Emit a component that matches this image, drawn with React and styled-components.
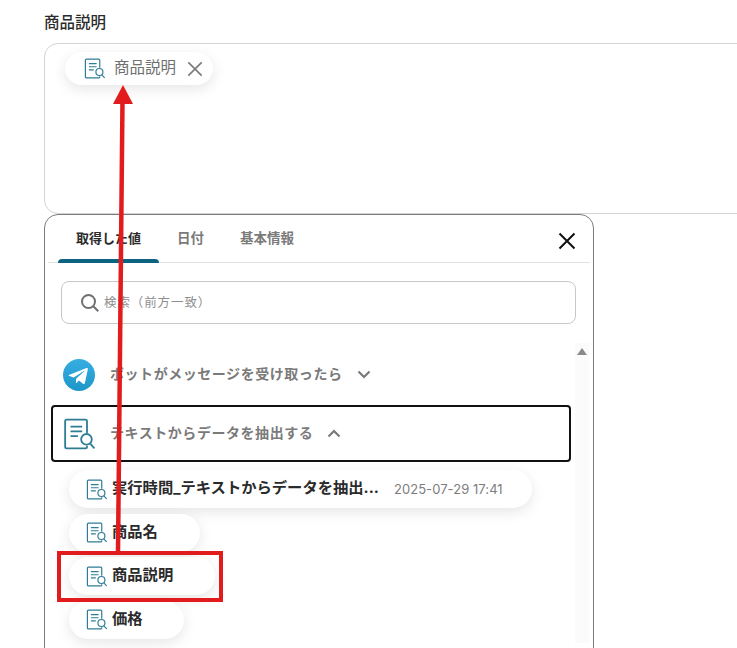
import React from 'react';
import styled, { createGlobalStyle } from 'styled-components';

const GlobalStyle = createGlobalStyle`
  html, body {
    margin: 0;
    padding: 0;
    background: #fff;
  }
  body {
    font-family: Inter, "Noto Sans CJK JP", sans-serif;
  }
`;

const Page = styled.div`
  position: relative;
  width: 737px;
  height: 648px;
  overflow: hidden;
  padding: 13px 0 0 44px;
  box-sizing: border-box;
`;

const Label = styled.div`
  font-size: 15.5px;
  line-height: 20px;
  font-weight: 500;
  color: #2b2b2b;
  margin-bottom: 10px;
`;

const Field = styled.div`
  width: 760px;
  height: 171px;
  box-sizing: border-box;
  border: 1px solid #d3d3da;
  border-radius: 14px;
  padding: 8px 0 0 20px;
`;

const Chip = styled.div`
  display: inline-flex;
  align-items: center;
  box-sizing: border-box;
  height: ${p => p.$h || 38}px;
  width: ${p => p.$w}px;
  padding-left: 17px;
  gap: 5px;
  border-radius: 20px;
  background: #fff;
  box-shadow: 0 4px 14px rgba(0, 0, 0, 0.1);
  flex: none;
`;

const FieldChip = styled(Chip)`
  padding-left: 19px;
  gap: 9px;
`;

const FieldChipText = styled.span`
  font-size: 15.5px;
  line-height: 20px;
  padding-bottom: 1px;
  color: #6f6f6f;
`;

const ChipClose = styled.span`
  display: flex;
  margin-left: 2px;
`;

const Popup = styled.div`
  width: 550px;
  height: 460px;
  box-sizing: border-box;
  background: #fff;
  border: 1px solid #7c7c7c;
  border-radius: 14px;
`;

const Header = styled.div`
  display: flex;
  align-items: stretch;
  justify-content: space-between;
  height: 47px;
  margin: 0 3px;
  padding: 0 14px 0 10px;
  border-bottom: 1px solid #e3e3e3;
`;

const Tabs = styled.div`
  display: flex;
`;

const Tab = styled.div`
  position: relative;
  padding: 14px 18px 0;
  font-size: ${p => (p.$active ? 13 : 13.5)}px;
  line-height: 18px;
  font-weight: 700;
  color: ${p => (p.$active ? '#2b2b2b' : '#7a7a7a')};
  ${p => p.$active && `
    &::after {
      content: '';
      position: absolute;
      left: 0;
      right: 0;
      bottom: -1px;
      height: 4px;
      border-radius: 4px 4px 0 0;
      background: #0c6480;
    }
  `}
`;

const CloseBtn = styled.div`
  display: flex;
  align-items: center;
  padding-top: 4px;
`;

const Search = styled.div`
  display: flex;
  align-items: center;
  gap: 4px;
  height: 43px;
  box-sizing: border-box;
  margin: 18px 17px 0 16px;
  padding-left: 18px;
  border: 1px solid #c8c8c8;
  border-radius: 8px;
`;

const Placeholder = styled.span`
  font-size: 12.5px;
  line-height: 18px;
  letter-spacing: 0.9px;
  color: #8e8e8e;
`;

const Body = styled.div`
  display: flex;
  margin: 19px 4px 0 6px;
`;

const List = styled.div`
  flex: 1;
  min-width: 0;
  padding-top: 3px;
`;

const Scrollbar = styled.div`
  width: 14px;
  height: 300px;
  background: #fbfbfb;
  display: flex;
  justify-content: center;
  padding-top: 5px;
  box-sizing: border-box;
`;

const UpArrow = styled.div`
  width: 0;
  height: 0;
  border-left: 5px solid transparent;
  border-right: 5px solid transparent;
  border-bottom: 7px solid #8a8a8a;
`;

const Group = styled.div`
  display: flex;
  align-items: center;
  box-sizing: border-box;
  height: 57px;
  width: 520px;
  padding-left: 10px;
  gap: 15px;
  border: ${p => (p.$selected ? '2px solid #111' : '2px solid transparent')};
  border-radius: 4px;
  margin-bottom: ${p => (p.$selected ? 8 : 2)}px;
`;

const GroupName = styled.span`
  font-size: 14px;
  line-height: 20px;
  padding-bottom: 1px;
  font-weight: 700;
  letter-spacing: 0.55px;
  color: #7a7a7a;
`;

const Chevron = styled.span`
  display: flex;
  margin-left: -1px;
`;

const Values = styled.div`
  display: flex;
  flex-direction: column;
  align-items: flex-start;
  gap: 5.5px;
  padding-left: 18px;
`;

const ValueName = styled.span`
  font-size: 15.3px;
  line-height: 20px;
  padding-bottom: 2px;
  font-weight: 700;
  color: #2a2a2a;
  white-space: nowrap;
`;

const ValueDate = styled.span`
  font-size: 13px;
  line-height: 20px;
  padding-bottom: 1px;
  letter-spacing: 0.06px;
  color: #7d7d7d;
  margin-left: 10px;
`;

const Callout = styled.div`
  position: absolute;
  left: 57px;
  top: 551px;
  width: 166px;
  height: 51px;
  box-sizing: border-box;
  border: 4px solid #e21c1c;
`;

const ArrowLayer = styled.svg`
  position: absolute;
  left: 0;
  top: 0;
  pointer-events: none;
`;

function DocIcon({ size = 21 }) {
  return (
    <svg width={size} height={size} viewBox="0 0 30 30" fill="none" stroke="#2f7d95" strokeWidth="1.7" style={{ flex: 'none' }}>
      <path d="M20 1.5H3.5a1.5 1.5 0 0 0-1.5 1.5v24a1.5 1.5 0 0 0 1.5 1.5H21a1.5 1.5 0 0 0 1.5-1.5v-1M22.5 14V3a1.5 1.5 0 0 0-1.5-1.5h-2" />
      <path d="M7 8h11M7 12.5h11M7 17h7" stroke="#2f7d95" />
      <circle cx="22" cy="20" r="5" fill="#fff" />
      <path d="M25.5 24l4 4.5" />
    </svg>
  );
}

function TelegramIcon() {
  return (
    <svg width="32" height="32" viewBox="0 0 32 32" style={{ flex: 'none' }}>
      <defs>
        <linearGradient id="tg" x1="0.5" y1="0" x2="0.5" y2="1">
          <stop offset="0" stopColor="#37aee2" />
          <stop offset="1" stopColor="#1e96c8" />
        </linearGradient>
      </defs>
      <circle cx="16" cy="16" r="16" fill="url(#tg)" />
      <path d="M6.5 15.8l17-6.7c.9-.3 1.6.2 1.3 1.4l-2.9 13.6c-.2 1-.8 1.2-1.6.8l-4.4-3.3-2.1 2.1c-.3.3-.5.4-.9.4l.3-4.5 8.2-7.4c.4-.3-.1-.5-.6-.2l-10.1 6.4-4.3-1.4c-.9-.3-.9-.9.1-1.2z" fill="#fff" />
    </svg>
  );
}

function Cross({ size, color, width }) {
  return (
    <svg width={size} height={size} viewBox="0 0 18 18" fill="none" stroke={color} strokeWidth={width}>
      <path d="M1.5 1.5l15 15M16.5 1.5l-15 15" />
    </svg>
  );
}

function Caret({ up }) {
  return (
    <svg width="14" height="9" viewBox="0 0 14 9" fill="none" stroke="#7a7a7a" strokeWidth="2.2">
      <path d={up ? 'M1.5 7.5L7 2l5.5 5.5' : 'M1.5 1.5L7 7l5.5-5.5'} />
    </svg>
  );
}

function SearchIcon() {
  return (
    <svg width="20" height="20" viewBox="0 0 20 20" fill="none" stroke="#707070" strokeWidth="2">
      <circle cx="8.5" cy="8.5" r="6.5" />
      <path d="M13.3 13.3l5 5" />
    </svg>
  );
}

const values = [
  { name: '実行時間_テキストからデータを抽出...', date: '2025-07-29 17:41', w: 463 },
  { name: '商品名', w: 131 },
  { name: '商品説明', w: 146 },
  { name: '価格', w: 115 },
];

export default function App() {
  return (
    <>
      <GlobalStyle />
      <Page>
        <Label>商品説明</Label>
        <Field>
          <FieldChip $w={148} $h={33}>
            <DocIcon />
            <FieldChipText>商品説明</FieldChipText>
            <ChipClose>
              <Cross size={16} color="#7a7a7a" width={1.8} />
            </ChipClose>
          </FieldChip>
        </Field>
        <Popup>
          <Header>
            <Tabs>
              <Tab $active>取得した値</Tab>
              <Tab>日付</Tab>
              <Tab>基本情報</Tab>
            </Tabs>
            <CloseBtn>
              <Cross size={18} color="#111" width={2} />
            </CloseBtn>
          </Header>
          <Search>
            <SearchIcon />
            <Placeholder>検索（前方一致）</Placeholder>
          </Search>
          <Body>
            <List>
              <Group>
                <TelegramIcon />
                <GroupName>ボットがメッセージを受け取ったら</GroupName>
                <Chevron><Caret /></Chevron>
              </Group>
              <Group $selected>
                <DocIcon size={32} />
                <GroupName>テキストからデータを抽出する</GroupName>
                <Chevron><Caret up /></Chevron>
              </Group>
              <Values>
                {values.map(v => (
                  <Chip key={v.name} $w={v.w}>
                    <DocIcon />
                    <ValueName>{v.name}</ValueName>
                    {v.date && <ValueDate>{v.date}</ValueDate>}
                  </Chip>
                ))}
              </Values>
            </List>
            <Scrollbar>
              <UpArrow />
            </Scrollbar>
          </Body>
        </Popup>
        <Callout />
        <ArrowLayer width="737" height="648" viewBox="0 0 737 648">
          <path d="M118 552L122.5 100" stroke="#e21c1c" strokeWidth="4.5" fill="none" />
          <path d="M123 85l10 19h-20z" fill="#e21c1c" />
        </ArrowLayer>
      </Page>
    </>
  );
}
